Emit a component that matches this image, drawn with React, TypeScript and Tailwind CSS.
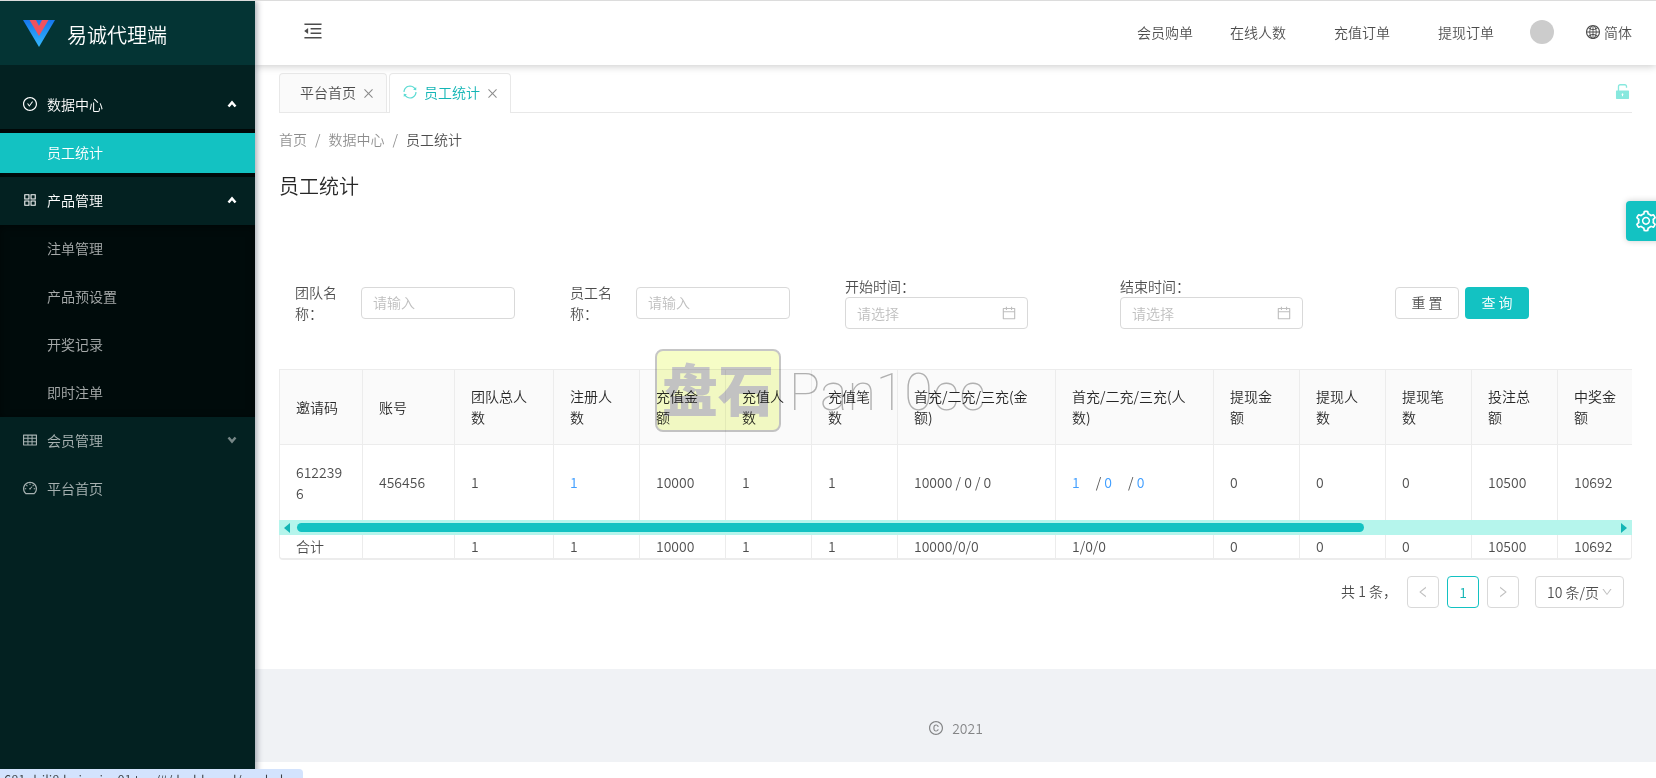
import { useState } from 'react';
import {
  AiOutlineAppstore,
  AiOutlineCalendar,
  AiOutlineCheckCircle,
  AiOutlineClose,
  AiOutlineCopyright,
  AiOutlineDashboard,
  AiOutlineDown,
  AiOutlineGlobal,
  AiOutlineLeft,
  AiOutlineMenuFold,
  AiOutlineRight,
  AiOutlineSetting,
  AiOutlineSync,
  AiOutlineTable,
  AiFillUnlock,
} from 'react-icons/ai';

const menus = [
  { label: '数据中心', icon: AiOutlineCheckCircle, open: true, children: ['员工统计'] },
  { label: '产品管理', icon: AiOutlineAppstore, open: true, children: ['注单管理', '产品预设置', '开奖记录', '即时注单'] },
  { label: '会员管理', icon: AiOutlineTable, open: false, children: [] },
];

const columns = [
  { title: '邀请码', width: 'w-[83px]', value: '6122396', total: '合计' },
  { title: '账号', width: 'w-[92px]', value: '456456', total: '' },
  { title: '团队总人数', width: 'w-[99px]', value: '1', total: '1' },
  { title: '注册人数', width: 'w-[86px]', value: '1', total: '1', link: true },
  { title: '充值金额', width: 'w-[86px]', value: '10000', total: '10000' },
  { title: '充值人数', width: 'w-[86px]', value: '1', total: '1' },
  { title: '充值笔数', width: 'w-[86px]', value: '1', total: '1' },
  { title: '首充/二充/三充(金额)', width: 'w-[158px]', value: '10000 / 0 / 0', total: '10000/0/0' },
  { title: '首充/二充/三充(人数)', width: 'w-[158px]', values: ['1', '0', '0'], total: '1/0/0' },
  { title: '提现金额', width: 'w-[86px]', value: '0', total: '0' },
  { title: '提现人数', width: 'w-[86px]', value: '0', total: '0' },
  { title: '提现笔数', width: 'w-[86px]', value: '0', total: '0' },
  { title: '投注总额', width: 'w-[86px]', value: '10500', total: '10500' },
  { title: '中奖金额', width: '', value: '10692', total: '10692' },
];

function Logo() {
  return (
    <svg viewBox="0 0 32 27" className="h-[27px] w-8 shrink-0">
      <defs>
        <linearGradient id="logo-blue" x1="0" y1="0" x2="0" y2="1">
          <stop offset="0" stopColor="#1677ef" />
          <stop offset="1" stopColor="#35b8fb" />
        </linearGradient>
      </defs>
      <path d="M0 0h32L16 27z" fill="url(#logo-blue)" />
      <path d="M6.500 0h6.500l3 6 3-6h6.500L16 16z" fill="#f0525f" />
    </svg>
  );
}

function Arrow({ up }: { up: boolean }) {
  return (
    <svg viewBox="0 0 10 8" className="h-2 w-[10px]" fill="none" stroke="currentColor" strokeWidth="2.500">
      <path d={up ? 'M1.500 6.500L5 2.500l3.500 4' : 'M1.500 1.500L5 5.500l3.500-4'} />
    </svg>
  );
}

function Sidebar() {
  return (
    <aside className="relative z-20 flex w-[255px] shrink-0 flex-col bg-[#032121] shadow-[2px_0_6px_rgba(0,21,41,0.35)]">
      <div className="flex h-16 items-center gap-3 bg-[#043434] pl-[23px]">
        <Logo />
        <h1 className="pt-1 text-xl leading-8 text-white">易诚代理端</h1>
      </div>
      <nav className="pt-4 text-sm text-white/65">
        {menus.map((menu) => (
          <div key={menu.label}>
            <button
              type="button"
              className={`flex h-12 w-full items-center gap-[9px] pr-[18px] pb-[2px] pl-[22px] ${menu.open ? 'text-white' : ''}`}
            >
              <menu.icon className="size-4" />
              <span>{menu.label}</span>
              <span className={menu.open ? 'ml-auto' : 'ml-auto opacity-70'}>
                <Arrow up={menu.open} />
              </span>
            </button>
            {menu.open && (
              <ul className="bg-[#000b0b] shadow-[inset_0_2px_8px_rgba(0,0,0,0.45)]">
                {menu.children.map((child) => (
                  <li key={child} className="py-1">
                    <a
                      href="#"
                      className={`block pb-[2px] pl-[47px] leading-[38px] ${child === '员工统计' ? 'bg-[#13c2c2] text-white' : ''}`}
                    >
                      {child}
                    </a>
                  </li>
                ))}
              </ul>
            )}
          </div>
        ))}
        <a href="#" className="flex h-12 items-center gap-[9px] pb-[2px] pl-[22px]">
          <AiOutlineDashboard className="size-4" />
          平台首页
        </a>
      </nav>
    </aside>
  );
}

function Header() {
  return (
    <header className="relative z-10 flex h-16 items-center bg-white pr-6 pl-[47px] text-sm shadow-[0_1px_8px_rgba(0,0,0,0.22)]">
      <button type="button" aria-label="菜单" className="pb-1">
        <AiOutlineMenuFold className="size-[22px]" />
      </button>
      <nav className="ml-auto flex items-center pb-[2px]">
        <a href="#" className="mr-[37px]">会员购单</a>
        <a href="#" className="mr-12">在线人数</a>
        <a href="#" className="mr-12">充值订单</a>
        <a href="#" className="mr-9">提现订单</a>
        <span className="mr-[31px] size-6 rounded-full bg-[#ccc]" />
        <button type="button" className="flex items-center gap-[3px]">
          <AiOutlineGlobal className="size-4" />
          简体
        </button>
      </nav>
    </header>
  );
}

function Tabs() {
  return (
    <div className="flex items-end gap-[2px] border-b border-[#e8e8e8] text-sm">
      <div className="flex h-[39px] items-center gap-[6px] rounded-t border border-b-0 border-[#e8e8e8] bg-[#fafafa] pr-[11px] pb-[2px] pl-5">
        <a href="#">平台首页</a>
        <button type="button" aria-label="关闭" className="pt-[3px] text-black/45">
          <AiOutlineClose className="size-[13px]" />
        </button>
      </div>
      <div className="-mb-px flex h-10 items-center gap-[6px] rounded-t border border-b-0 border-[#e8e8e8] bg-white pr-[11px] pb-[3px] pl-3 text-[#13b5b5]">
        <AiOutlineSync className="size-4 text-[#5cdbd3]" />
        <a href="#">员工统计</a>
        <button type="button" aria-label="关闭" className="pt-[3px] text-black/45">
          <AiOutlineClose className="size-[13px]" />
        </button>
      </div>
      <button type="button" aria-label="锁定" className="ml-auto self-center pb-[2px] text-[#87e8de]">
        <AiFillUnlock className="size-[19px]" />
      </button>
    </div>
  );
}

function NameField({ id, label }: { id: string; label: string }) {
  return (
    <div className="flex w-[275px] items-center gap-6">
      <label htmlFor={id} className="w-[42px] leading-[21px]">
        {label}
      </label>
      <input
        id={id}
        placeholder="请输入"
        className="h-8 w-[154px] rounded border border-[#d9d9d9] px-[11px] pb-[2px] placeholder:text-[#bfbfbf]"
      />
    </div>
  );
}

function DateField({ id, label }: { id: string; label: string }) {
  return (
    <div className="w-[275px]">
      <label htmlFor={id} className="block leading-[21px]">
        {label}
      </label>
      <div className="relative w-[183px]">
        <input
          id={id}
          placeholder="请选择"
          className="h-8 w-full rounded border border-[#d9d9d9] px-[11px] placeholder:text-[#bfbfbf]"
        />
        <AiOutlineCalendar className="absolute top-2 right-[11px] size-4 text-[#bfbfbf]" />
      </div>
    </div>
  );
}

function SearchForm() {
  return (
    <form className="flex items-center pl-4 text-sm" onSubmit={(e) => e.preventDefault()}>
      <NameField id="team" label="团队名称：" />
      <NameField id="staff" label="员工名称：" />
      <DateField id="start" label="开始时间：" />
      <DateField id="end" label="结束时间：" />
      <div className="flex gap-[6px]">
        <button type="reset" className="h-8 w-16 rounded border border-[#d9d9d9] pb-[2px]">
          重 置
        </button>
        <button type="submit" className="h-8 w-16 rounded bg-[#13c2c2] pb-[2px] text-white">
          查 询
        </button>
      </div>
    </form>
  );
}

function StatTable() {
  return (
    <div className="text-sm leading-[21px]">
      <table className="w-full table-fixed border-separate border-spacing-0 border-t border-l border-[#ececec]">
        <thead>
          <tr>
            {columns.map((col) => (
              <th
                key={col.title}
                className={`${col.width} h-[75px] border-r border-b border-[#ececec] bg-[#fafafa] px-4 text-left font-[350] text-black/85 last:border-r-0`}
              >
                {col.title}
              </th>
            ))}
          </tr>
        </thead>
        <tbody>
          <tr>
            {columns.map((col) => (
              <td key={col.title} className="h-[75px] border-r border-[#ececec] px-4 break-all last:border-r-0">
                {col.values ? (
                  <span className="whitespace-pre">
                    <a href="#" className="mr-4 text-[#409eff]">{col.values[0]}</a>/ <a href="#" className="mr-4 text-[#409eff]">{col.values[1]}</a>/ <a href="#" className="text-[#409eff]">{col.values[2]}</a>
                  </span>
                ) : col.link ? (
                  <a href="#" className="text-[#409eff]">{col.value}</a>
                ) : (
                  col.value
                )}
              </td>
            ))}
          </tr>
        </tbody>
      </table>
      <div className="flex h-[15px] items-center bg-[#b5f5ec] px-[5px]">
        <svg viewBox="0 0 6 10" className="h-[10px] w-[6px] fill-[#13b5b5]">
          <path d="M6 0v10L0 5z" />
        </svg>
        <div className="mx-[7px] flex-1">
          <div className="h-[9px] w-[81%] rounded-full bg-[#13c2c2]" />
        </div>
        <svg viewBox="0 0 6 10" className="h-[10px] w-[6px] fill-[#13b5b5]">
          <path d="M0 0v10l6-5z" />
        </svg>
      </div>
      <table className="w-full table-fixed border-separate border-spacing-0 rounded-b border-b-2 border-l border-[#ececec]">
        <tbody>
          <tr>
            {columns.map((col) => (
              <td key={col.title} className={`${col.width} h-[23px] border-r border-[#ececec] px-4`}>
                {col.total}
              </td>
            ))}
          </tr>
        </tbody>
      </table>
    </div>
  );
}

function Pagination() {
  const [pageSize, setPageSize] = useState('10');

  return (
    <div className="mt-4 flex items-center justify-end gap-2 pr-2 text-sm">
      <span className="mr-[2px] pb-[2px]">共 1 条，</span>
      <button type="button" aria-label="上一页" className="flex size-8 items-center justify-center rounded border border-[#d9d9d9] text-black/25">
        <AiOutlineLeft className="size-[14px]" />
      </button>
      <button type="button" className="size-8 rounded border border-[#13c2c2] text-[#13b5b5]">
        1
      </button>
      <button type="button" aria-label="下一页" className="flex size-8 items-center justify-center rounded border border-[#d9d9d9] text-black/25">
        <AiOutlineRight className="size-[14px]" />
      </button>
      <div className="relative ml-2">
        <select
          aria-label="每页条数"
          value={pageSize}
          onChange={(e) => setPageSize(e.target.value)}
          className="h-8 w-[89px] appearance-none rounded border border-[#d9d9d9] pl-[11px]"
        >
          <option value="10">10 条/页</option>
        </select>
        <AiOutlineDown className="pointer-events-none absolute top-[10px] right-[11px] size-3 text-black/25" />
      </div>
    </div>
  );
}

function Watermark() {
  return (
    <div className="pointer-events-none absolute top-[284px] left-[400px] z-10 flex items-center gap-2 mix-blend-multiply">
      <div className="flex h-[83px] w-[126px] items-center justify-center rounded-lg border-2 border-[#c6c6c6] bg-[#f6fdc6] pb-2 text-[56px] leading-none font-black text-[#c6c6c6]">
        盘石
      </div>
      <span className="pt-1 font-['Roboto'] text-[52px] leading-none font-thin text-[#b4b4b4]">Pan10cc</span>
    </div>
  );
}

export default function App() {
  return (
    <div className="relative flex min-h-screen overflow-hidden border-t border-[#dcdcdc] bg-white font-['Noto_Sans_CJK_SC',sans-serif] font-[350] text-black/70">
      <Sidebar />
      <div className="flex min-w-0 flex-1 flex-col">
        <Header />
        <main className="relative px-6 pt-2">
          <Tabs />
          <div className="flex gap-2 pt-[15px] text-sm leading-[22px] text-black/45">
            <a href="#">首页</a>
            <span>/</span>
            <a href="#">数据中心</a>
            <span>/</span>
            <span className="text-black/70">员工统计</span>
          </div>
          <h2 className="mt-5 text-xl leading-8 font-[350] text-black/85">员工统计</h2>
          <div className="mt-[74px]">
            <SearchForm />
          </div>
          <div className="mt-10">
            <StatTable />
          </div>
          <Pagination />
          <Watermark />
        </main>
        <footer className="mt-[61px] flex h-[93px] items-center justify-center gap-2 bg-[#f0f2f5] pt-6 text-sm text-black/45">
          <AiOutlineCopyright className="size-4" />
          2021
        </footer>
      </div>
      <button
        type="button"
        aria-label="设置"
        className="absolute top-[200px] -right-[10px] z-20 flex size-10 items-center justify-center rounded bg-[#13c2c2] text-white shadow-[0_0_6px_rgba(0,0,0,0.2)]"
      >
        <AiOutlineSetting className="size-6" />
      </button>
      <div className="absolute bottom-0 left-0 z-30 h-[9px] w-[303px] overflow-hidden rounded-tr bg-[#d3e3fd] pt-[3px] pl-1 text-[13px] leading-4 whitespace-nowrap text-[#3c4043]">
        681.drili8.hoiweiyu01.top/#/dashboard/workpla
      </div>
    </div>
  );
}
